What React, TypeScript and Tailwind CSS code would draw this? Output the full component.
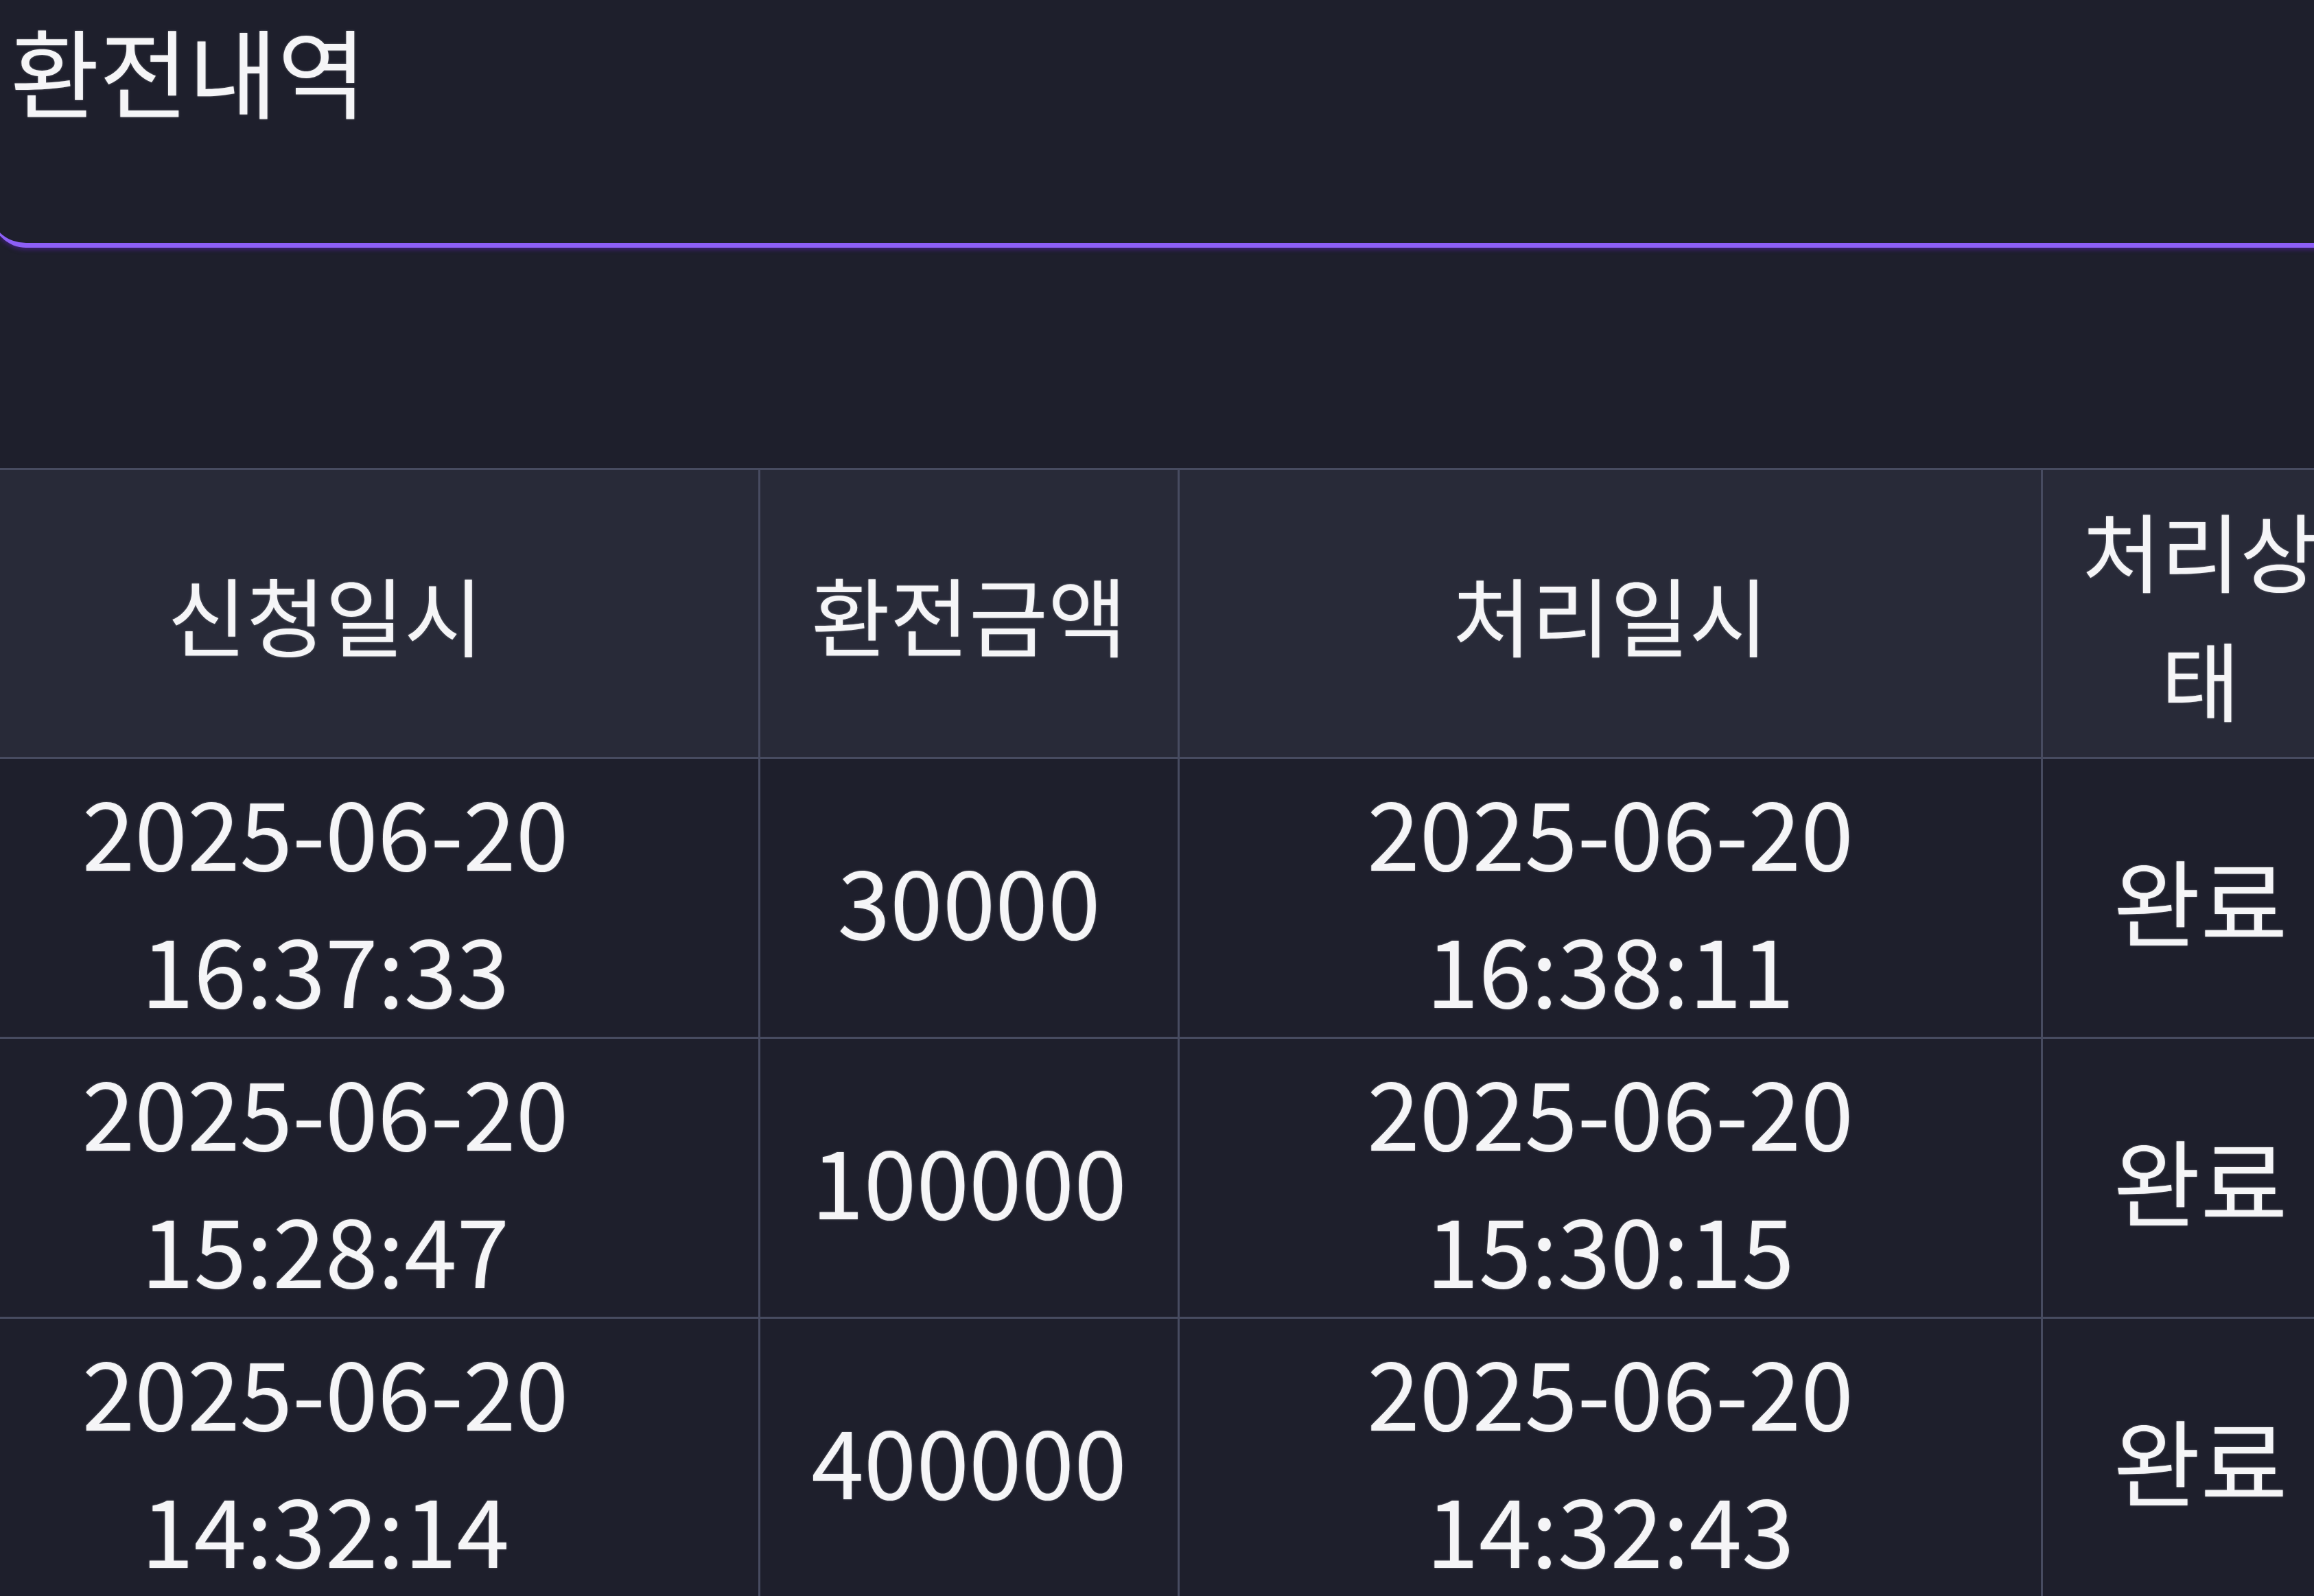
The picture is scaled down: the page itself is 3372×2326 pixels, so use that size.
import React from "react";

type Row = {
  requestedAt: [string, string];
  amount: string;
  processedAt: [string, string];
  status: string;
};

const rows: Row[] = [
  { requestedAt: ["2025-06-20", "16:37:33"], amount: "30000", processedAt: ["2025-06-20", "16:38:11"], status: "완료" },
  { requestedAt: ["2025-06-20", "15:28:47"], amount: "100000", processedAt: ["2025-06-20", "15:30:15"], status: "완료" },
  { requestedAt: ["2025-06-20", "14:32:14"], amount: "400000", processedAt: ["2025-06-20", "14:32:43"], status: "완료" },
];

const font = "font-['Noto_Sans_CJK_KR','Noto_Sans',sans-serif]";
const cell = "border-[3px] border-[#474b60] text-[138px] leading-[200px] font-normal";

const App: React.FC = () => {
  return (
    <div
      className={`w-[3372px] h-[2326px] overflow-hidden bg-[#1e1f2c] text-[#f5f5f7] [text-shadow:0_0_3px_rgba(255,255,255,0.35)] ${font}`}
    >
      {/* Header card with purple underline */}
      <div className="-ml-[12px] w-[3440px] h-[361px] rounded-b-[50px] border-b-[7px] border-[#8d5ff7] shadow-[0_3px_6px_rgba(91,33,182,0.5)] pl-[27px]">
        <h1 className="text-[141px] leading-[202px] font-normal">환전내역</h1>
      </div>

      {/* Table */}
      <table className="mt-[321px] -ml-[160px] w-[3596px] table-fixed border-collapse text-center">
        <colgroup>
          <col className="w-[1265px]" />
          <col className="w-[611px]" />
          <col className="w-[1258px]" />
          <col className="w-[462px]" />
        </colgroup>
        <thead>
          <tr className="bg-[#282a38] h-[421px]">
            {["신청일시", "환전금액", "처리일시", "처리상태"].map((h) => (
              <th
                key={h}
                className="border-[3px] border-[#474b60] px-[40px] text-[125px] leading-[188px] font-normal"
              >
                {h}
              </th>
            ))}
          </tr>
        </thead>
        <tbody>
          {rows.map((r, i) => (
            <tr key={i} className="h-[408px]">
              <td className={cell}>
                <div>{r.requestedAt[0]}</div>
                <div>{r.requestedAt[1]}</div>
              </td>
              <td className={cell}>{r.amount}</td>
              <td className={cell}>
                <div>{r.processedAt[0]}</div>
                <div>{r.processedAt[1]}</div>
              </td>
              <td className={cell}>{r.status}</td>
            </tr>
          ))}
        </tbody>
      </table>
    </div>
  );
};

export default App;
